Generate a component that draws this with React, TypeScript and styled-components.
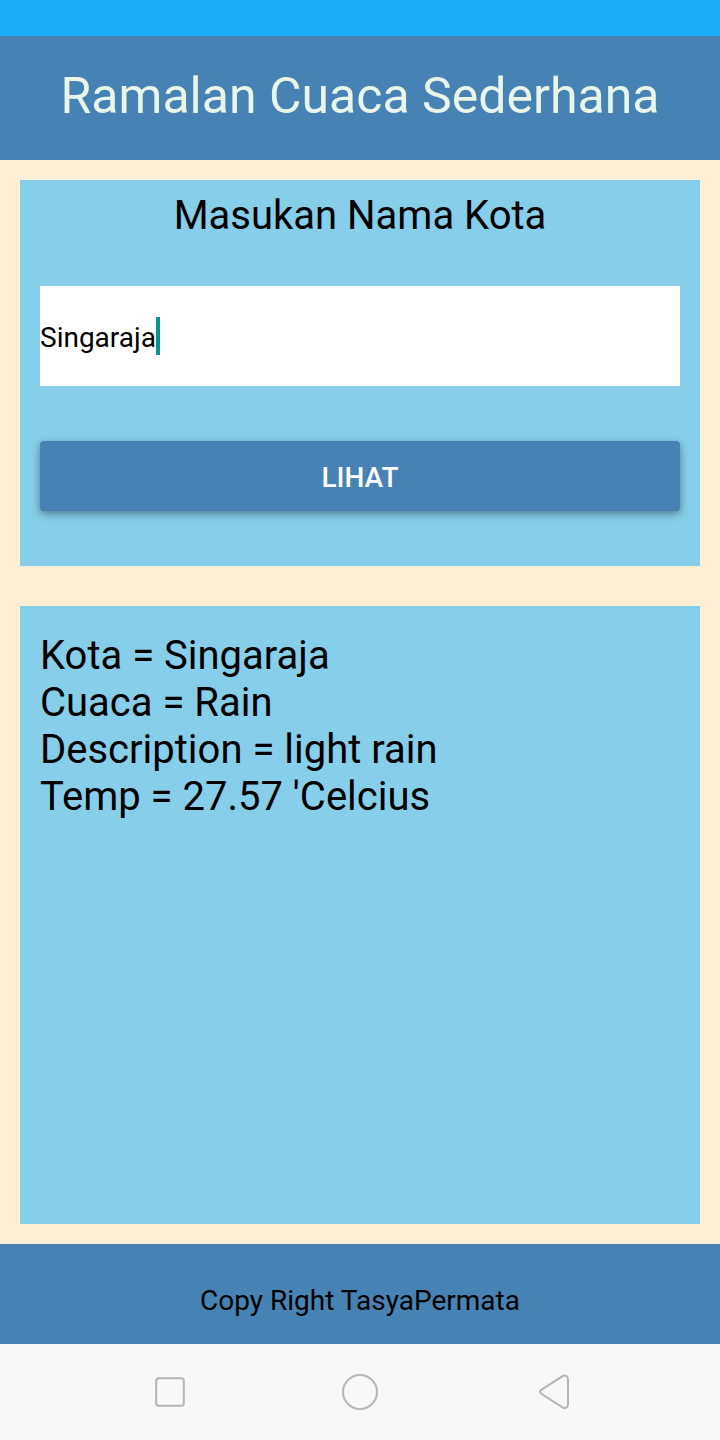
import React, { useState } from 'react';
import styled, { createGlobalStyle } from 'styled-components';

const GlobalStyle = createGlobalStyle`
  * { box-sizing: border-box; }
  body {
    margin: 0;
    font-family: Roboto, "Liberation Sans", sans-serif;
    color: #000;
    background: #ffefd5;
  }
`;

const Screen = styled.div`
  display: flex;
  flex-direction: column;
  min-height: 100vh;
`;

const StatusBar = styled.div`
  height: 36px;
  background: #1cabf6;
`;

const Header = styled.header`
  padding: 30px 20px 34px;
  background: #4682b4;
  text-align: center;
`;

const Title = styled.h1`
  margin: 0;
  font-size: 50px;
  line-height: 60px;
  font-weight: 400;
  color: #e8f5e9;
`;

const Main = styled.main`
  flex: 1;
  display: flex;
  flex-direction: column;
  gap: 40px;
  padding: 20px;
`;

const SearchForm = styled.form`
  display: flex;
  flex-direction: column;
  padding: 12px 20px 55px;
  background: #87ceeb;
`;

const Label = styled.label`
  margin-bottom: 47px;
  font-size: 40px;
  line-height: 47px;
  text-align: center;
`;

const CityField = styled.div`
  display: flex;
  align-items: center;
  height: 100px;
  margin-bottom: 55px;
  background: #fff;
`;

const CityInput = styled.input`
  field-sizing: content;
  min-width: 0;
  max-width: 100%;
  height: 100%;
  padding: 2px 0 0;
  border: 0;
  outline: 0;
  background: none;
  color: #000;
  caret-color: transparent;
  font: 400 28px/34px Roboto, "Liberation Sans", sans-serif;
`;

const Caret = styled.span`
  flex: none;
  width: 4px;
  height: 38px;
  background: #009688;
`;

const SubmitButton = styled.button`
  height: 70px;
  padding: 4px 0 0;
  border: 0;
  border-radius: 4px;
  background: #4682b4;
  color: #fff;
  box-shadow: 0 3px 8px rgba(0, 0, 0, 0.4);
  font: 500 28px/34px Roboto, "Liberation Sans", sans-serif;
`;

const Result = styled.section`
  flex: 1;
  padding: 26px 20px;
  background: #87ceeb;
`;

const ResultLine = styled.p`
  margin: 0;
  font-size: 40px;
  line-height: 47px;
`;

const Footer = styled.footer`
  padding: 40px 20px 26px;
  background: #4682b4;
  font-size: 28px;
  line-height: 34px;
  text-align: center;
`;

const NavBar = styled.nav`
  display: flex;
  justify-content: center;
  gap: 150px;
  padding: 28px 0;
  background: #f8f8f8;
`;

const NavButton = styled.button`
  width: 40px;
  height: 40px;
  padding: 0;
  border: 0;
  background: none;

  svg {
    display: block;
    fill: none;
    stroke: #b5b5b5;
    stroke-width: 2;
    stroke-linejoin: round;
  }
`;

const weather = [
  'Kota = Singaraja',
  'Cuaca = Rain',
  'Description = light rain',
  "Temp = 27.57 'Celcius",
];

export default function App() {
  const [city, setCity] = useState('Singaraja');

  return (
    <Screen>
      <GlobalStyle />
      <StatusBar />
      <Header>
        <Title>Ramalan Cuaca Sederhana</Title>
      </Header>
      <Main>
        <SearchForm onSubmit={(event) => event.preventDefault()}>
          <Label htmlFor="city">Masukan Nama Kota</Label>
          <CityField>
            <CityInput
              id="city"
              type="text"
              value={city}
              onChange={(event) => setCity(event.target.value)}
            />
            <Caret />
          </CityField>
          <SubmitButton type="submit">LIHAT</SubmitButton>
        </SearchForm>
        <Result>
          {weather.map((line) => (
            <ResultLine key={line}>{line}</ResultLine>
          ))}
        </Result>
      </Main>
      <Footer>Copy Right TasyaPermata</Footer>
      <NavBar>
        <NavButton type="button" aria-label="Recent apps">
          <svg width="40" height="40" viewBox="0 0 40 40">
            <rect x="6.2" y="6.2" width="27.600" height="27.600" rx="2.500" />
          </svg>
        </NavButton>
        <NavButton type="button" aria-label="Home">
          <svg width="40" height="40" viewBox="0 0 40 40">
            <circle cx="20" cy="20" r="17" />
          </svg>
        </NavButton>
        <NavButton type="button" aria-label="Back">
          <svg width="40" height="40" viewBox="0 0 40 40">
            <path d="M11.600 17.600 32.600 4.200C35 2.700 38 4 38 7.200V32.300C38 35.500 35 37 32.600 35.400L11.600 22C9.500 20.700 9.500 19 11.600 17.600Z" />
          </svg>
        </NavButton>
      </NavBar>
    </Screen>
  );
}
